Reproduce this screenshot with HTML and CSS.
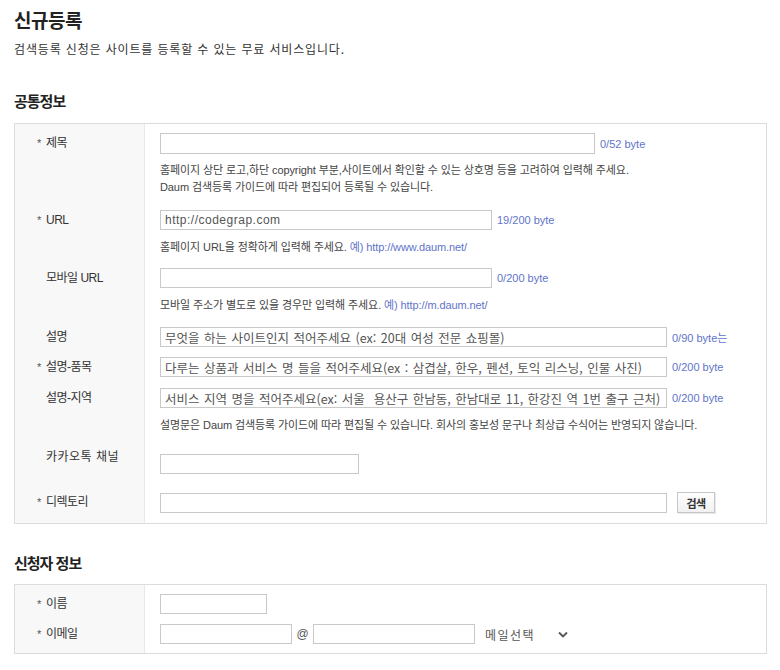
FILE: index.html
```html
<!DOCTYPE html>
<html lang="ko">
<head>
<meta charset="utf-8">
<title>신규등록</title>
<link rel="stylesheet" href="styles.css">
</head>
<body>
<h1 class="title">신규등록</h1>
<p class="desc">검색등록 신청은 사이트를 등록할 수 있는 무료 서비스입니다.</p>

<h2 class="sec-title">공통정보</h2>
<div class="box">
  <div class="row pt9">
    <div class="lab"><span class="req">제목</span></div>
    <div class="fld">
      <div class="line"><input class="inp w435 h21" type="text"><span class="cnt">0/52 byte</span></div>
      <p class="help">홈페이지 상단 로고,하단 copyright 부분,사이트에서 확인할 수 있는 상호명 등을 고려하여 입력해 주세요.<br>Daum 검색등록 가이드에 따라 편집되어 등록될 수 있습니다.</p>
    </div>
  </div>
  <div class="row pt14">
    <div class="lab"><span class="req">URL</span></div>
    <div class="fld">
      <div class="line"><input class="inp w332 val" type="text" value="http://codegrap.com"><span class="cnt">19/200 byte</span></div>
      <p class="help">홈페이지 URL을 정확하게 입력해 주세요. <span class="ex">예) http://www.daum.net/</span></p>
    </div>
  </div>
  <div class="row pt12">
    <div class="lab"><span class="opt">모바일 URL</span></div>
    <div class="fld">
      <div class="line"><input class="inp w332" type="text"><span class="cnt">0/200 byte</span></div>
      <p class="help">모바일 주소가 별도로 있을 경우만 입력해 주세요. <span class="ex">예) http://m.daum.net/</span></p>
    </div>
  </div>
  <div class="row pt13">
    <div class="lab"><span class="opt">설명</span></div>
    <div class="fld">
      <div class="line"><input class="inp w507" type="text" placeholder="무엇을 하는 사이트인지 적어주세요 (ex: 20대 여성 전문 쇼핑몰)"><span class="cnt">0/90 byte는</span></div>
    </div>
  </div>
  <div class="row pt10">
    <div class="lab"><span class="req">설명-품목</span></div>
    <div class="fld">
      <div class="line"><input class="inp w507" type="text" placeholder="다루는 상품과 서비스 명 들을 적어주세요(ex : 삼겹살, 한우, 펜션, 토익 리스닝, 인물 사진)"><span class="cnt">0/200 byte</span></div>
    </div>
  </div>
  <div class="row pt11">
    <div class="lab"><span class="opt">설명-지역</span></div>
    <div class="fld">
      <div class="line"><input class="inp w507" type="text" placeholder="서비스 지역 명을 적어주세요(ex: 서울  용산구 한남동, 한남대로 11, 한강진 역 1번 출구 근처)"><span class="cnt">0/200 byte</span></div>
      <p class="help">설명문은 Daum 검색등록 가이드에 따라 편집될 수 있습니다. 회사의 홍보성 문구나 최상급 수식어는 반영되지 않습니다.</p>
    </div>
  </div>
  <div class="row pt20">
    <div class="lab"><span class="opt up wide">카카오톡 채널</span></div>
    <div class="fld">
      <div class="line"><input class="inp w199" type="text"></div>
    </div>
  </div>
  <div class="row pt18 pb10">
    <div class="lab"><span class="req">디렉토리</span></div>
    <div class="fld">
      <div class="line"><input class="inp w507" type="text"><button class="btn" type="button">검색</button></div>
    </div>
  </div>
</div>

<h2 class="sec-title sec2">신청자 정보</h2>
<div class="box">
  <div class="row pt9">
    <div class="lab"><span class="req">이름</span></div>
    <div class="fld">
      <div class="line"><input class="inp w107" type="text"></div>
    </div>
  </div>
  <div class="row pt10 pb9">
    <div class="lab"><span class="req">이메일</span></div>
    <div class="fld">
      <div class="line">
        <input class="inp w132" type="text"><span class="at">@</span><input class="inp w162" type="text">
        <span class="sel">메일선택<svg class="chev" width="10" height="7" viewBox="0 0 10 7"><polyline points="1,1.5 5,5.5 9,1.5" fill="none" stroke="#555" stroke-width="1.8"/></svg></span>
      </div>
    </div>
  </div>
</div>
</body>
</html>
```

FILE: styles.css
```css
* { box-sizing: border-box; }
body {
  margin: 0;
  padding: 0 13px 0 14px;
  font-family: "Noto Sans CJK KR", sans-serif;
  color: #333;
  background: #fff;
}
.title {
  margin: 0;
  padding-top: 6px;
  font-size: 19px;
  line-height: 28px;
  font-weight: 700;
  letter-spacing: -0.5px;
  color: #222;
}
.desc {
  margin: 6px 0 0;
  font-size: 12px;
  line-height: 18px;
  color: #333;
  letter-spacing: 0.85px;
}
.sec-title {
  margin: 33px 0 12px;
  font-size: 15px;
  line-height: 20px;
  font-weight: 700;
  letter-spacing: -1px;
  color: #222;
}
.sec2 { margin-top: 29px; margin-bottom: 11px; }
.box {
  border: 1px solid #dcdcdc;
}
.row {
  display: grid;
  grid-template-columns: 130px 1fr;
}
.lab {
  background: #f8f8f8;
  border-right: 1px solid #e8e8e8;
  padding-left: 31px;
}
.fld { padding-left: 15px; }
.pt9 .lab, .pt9 .fld { padding-top: 9px; }
.pt10 .lab, .pt10 .fld { padding-top: 10px; }
.pt11 .lab, .pt11 .fld { padding-top: 11px; }
.pt12 .lab, .pt12 .fld { padding-top: 12px; }
.pt13 .lab, .pt13 .fld { padding-top: 13px; }
.pt14 .lab, .pt14 .fld { padding-top: 14px; }
.pt18 .lab, .pt18 .fld { padding-top: 18px; }
.pt20 .lab, .pt20 .fld { padding-top: 20px; }
.pb10 .lab, .pb10 .fld { padding-bottom: 10px; }
.pb9 .lab, .pb9 .fld { padding-bottom: 9px; }

.req, .opt {
  display: block;
  font-family: "Liberation Sans", "Noto Sans CJK KR", sans-serif;
  font-size: 12px;
  line-height: 20px;
  height: 20px;
  letter-spacing: -0.5px;
  color: #333;
}
.req::before {
  content: "*";
  display: inline-block;
  width: 9px;
  margin-left: -9px;
  font-family: "Liberation Sans", sans-serif;
  font-size: 11px;
  color: #555;
  letter-spacing: 0;
}
.up { margin-top: -7px; }
.wide { letter-spacing: 0.5px; }

.line {
  display: flex;
  align-items: center;
}
.inp {
  height: 20px;
  border: 1px solid #c9c9c9;
  padding: 0 4px;
  margin: 0;
  font-family: "Noto Sans CJK KR", sans-serif;
  font-size: 12.5px;
  word-spacing: 1px;
  color: #555;
  background: #fff;
  outline: none;
}
.inp::placeholder { color: #555; opacity: 1; }
.val {
  font-family: "Liberation Sans", sans-serif;
  font-size: 12px;
  letter-spacing: 0.5px;
  word-spacing: 0;
}
.h21 { height: 21px; }
.w435 { width: 435px; }
.w332 { width: 332px; }
.w507 { width: 507px; }
.w199 { width: 199px; }
.w107 { width: 107px; }
.w132 { width: 132px; }
.w162 { width: 162px; }
.cnt {
  margin-left: 5px;
  font-family: "Liberation Sans", "Noto Sans CJK KR", sans-serif;
  font-size: 11px;
  color: #5f74c9;
}
.help {
  margin: 9px 0 0;
  font-family: "Liberation Sans", "Noto Sans CJK KR", sans-serif;
  font-size: 11px;
  line-height: 17px;
  letter-spacing: -0.1px;
  color: #444;
}
.pt9 .help { margin-top: 8px; }
.ex { color: #5f74c9; }
.btn {
  margin-left: 10px;
  width: 38px;
  height: 21px;
  padding: 0;
  border: 1px solid #c6c6c6;
  background: linear-gradient(#ffffff, #f1f1f1);
  box-shadow: 1px 1px 1px rgba(0,0,0,0.08);
  font-family: "Noto Sans CJK KR", sans-serif;
  font-size: 11px;
  font-weight: 700;
  color: #333;
  letter-spacing: -0.5px;
}
.at {
  width: 21px;
  text-align: center;
  font-family: "Liberation Sans", sans-serif;
  font-size: 12px;
  color: #555;
}
.sel {
  display: inline-flex;
  align-items: center;
  margin-left: 10px;
  font-size: 12px;
  letter-spacing: 1.5px;
  color: #555;
}
.chev { margin-left: 23px; }
```
